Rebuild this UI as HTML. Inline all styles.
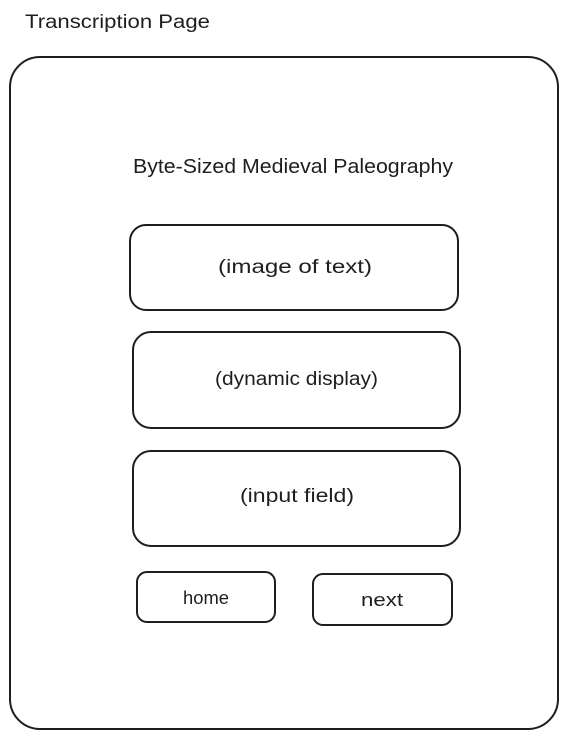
<!DOCTYPE html>
<html><head><meta charset="utf-8"><style>
html,body{margin:0;padding:0;background:#fff;width:569px;height:740px;overflow:hidden}
svg{display:block}
text{font-family:"Liberation Sans",sans-serif;fill:#1e1e1e}
</style></head><body>
<svg width="569" height="740" viewBox="0 0 569 740" xmlns="http://www.w3.org/2000/svg">
<g fill="none" stroke="#1e1e1e" stroke-width="2" stroke-linecap="round">
<rect x="10" y="57" width="548" height="672" rx="30"/>
<rect x="130" y="225" width="328" height="85" rx="16"/>
<rect x="133" y="332" width="327" height="96" rx="18"/>
<rect x="133" y="451" width="327" height="95" rx="18"/>
<rect x="137" y="572" width="138" height="50" rx="10"/>
<rect x="313" y="574" width="139" height="51" rx="10"/>
</g>
<text x="25" y="28" font-size="19" textLength="185" lengthAdjust="spacingAndGlyphs">Transcription Page</text>
<text x="133" y="173" font-size="20" textLength="320" lengthAdjust="spacingAndGlyphs">Byte-Sized Medieval Paleography</text>
<text x="218" y="273" font-size="19" textLength="154" lengthAdjust="spacingAndGlyphs">(image of text)</text>
<text x="215" y="385" font-size="19" textLength="163" lengthAdjust="spacingAndGlyphs">(dynamic display)</text>
<text x="240" y="502" font-size="19" textLength="114" lengthAdjust="spacingAndGlyphs">(input field)</text>
<text x="183" y="604" font-size="18" textLength="46" lengthAdjust="spacingAndGlyphs">home</text>
<text x="361" y="606" font-size="18" textLength="42" lengthAdjust="spacingAndGlyphs">next</text>
</svg>
</body></html>
